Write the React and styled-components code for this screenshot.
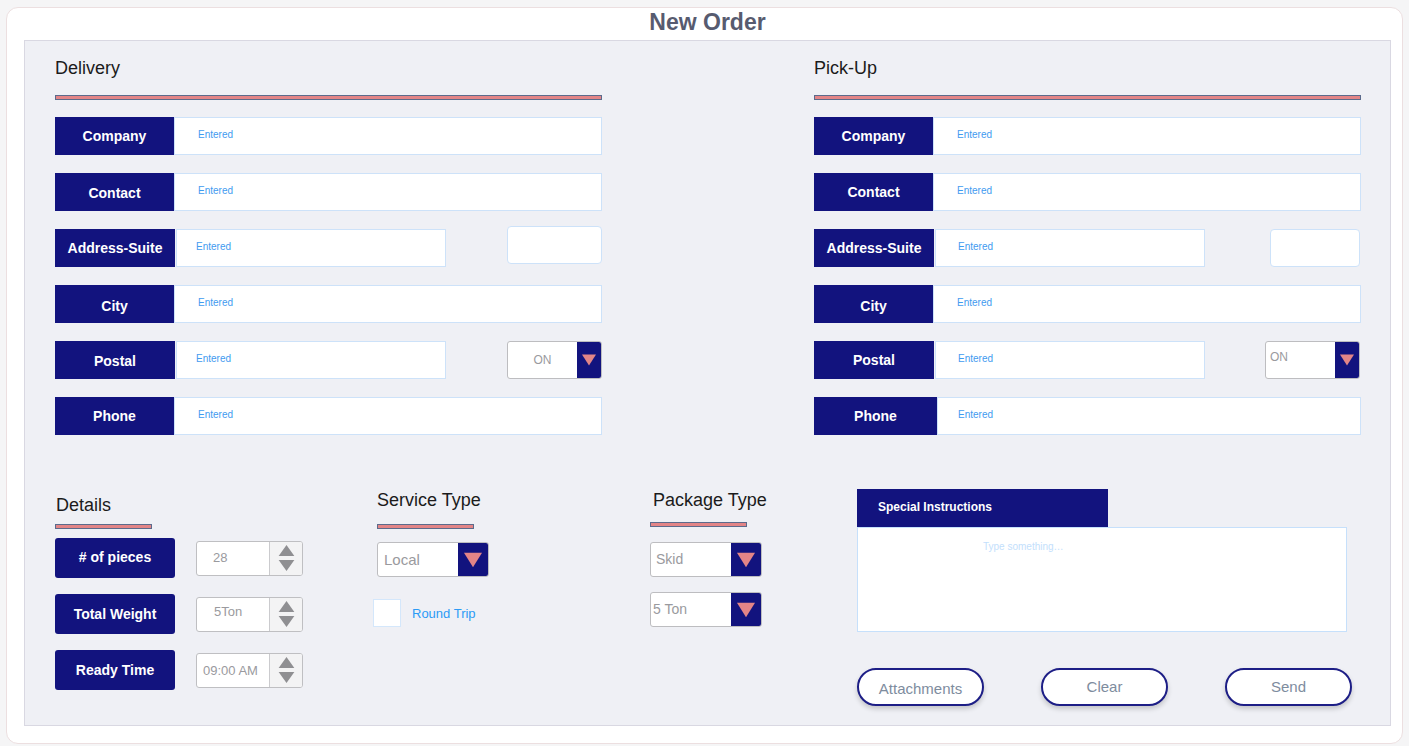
import styled, { createGlobalStyle } from "styled-components";

const navy = "#12137e";
const pink = "#e38587";

const GlobalStyle = createGlobalStyle`
  body {
    margin: 0;
    background: #f5f5f6;
    font-family: "Liberation Sans", Arial, sans-serif;
  }
`;

const Page = styled.div`
  padding: 7px 6px 2px 6px;
`;

const Card = styled.div`
  width: 1397px;
  height: 737px;
  box-sizing: border-box;
  background: #fff;
  border: 1px solid #ecdfe0;
  border-radius: 12px;
  padding: 0 11px 17px 17px;
  display: flex;
  flex-direction: column;
`;

const Title = styled.h1`
  margin: 0;
  height: 32px;
  line-height: 28px;
  text-align: center;
  font-size: 23px;
  font-weight: bold;
  color: #575b6f;
`;

const Panel = styled.div`
  flex: 1;
  background: #eff0f5;
  border: 1px solid #d9d8e2;
  padding: 0 30px;
  display: flex;
  flex-direction: column;
`;

const TopGrid = styled.div`
  display: flex;
  gap: 212px;
`;

const Column = styled.div`
  width: 547px;
  display: flex;
  flex-direction: column;
`;

const Heading = styled.div`
  font-size: 18px;
  line-height: 22px;
  color: #1b1b1b;
  margin-top: ${(p) => p.$top || 0}px;
  margin-left: ${(p) => p.$indent || 0}px;
`;

const Bar = styled.div`
  width: ${(p) => p.$w || 545}px;
  height: 3px;
  background: ${pink};
  border: 1px solid #5c6b8c;
  box-sizing: content-box;
  margin-top: ${(p) => p.$top || 16}px;
`;

const Rows = styled.div`
  display: flex;
  flex-direction: column;
  gap: 18px;
  margin-top: 17px;
`;

const Row = styled.div`
  display: flex;
  align-items: center;
  height: 38px;
`;

const Label = styled.div`
  width: ${(p) => p.$w || 119}px;
  height: 38px;
  flex-shrink: 0;
  background: ${navy};
  color: #fff;
  font-weight: bold;
  font-size: 14px;
  display: flex;
  align-items: center;
  justify-content: center;
  padding-top: ${(p) => p.$drop || 0}px;
  box-sizing: border-box;
`;

const Field = styled.div`
  height: 38px;
  box-sizing: border-box;
  background: #fff;
  border: 1px solid #cde2f9;
  margin-left: ${(p) => p.$gap || 0}px;
  width: ${(p) => (p.$w ? `${p.$w}px` : "auto")};
  flex: ${(p) => (p.$w ? "none" : 1)};
  padding: 0 0 3px ${(p) => p.$pad || 23}px;
  display: flex;
  align-items: center;
  font-size: 10px;
  color: #3f9bf0;
`;

const SmallBox = styled.div`
  width: ${(p) => p.$w}px;
  height: 38px;
  box-sizing: border-box;
  margin-left: auto;
  margin-right: ${(p) => p.$right || 0}px;
  align-self: flex-start;
  margin-top: ${(p) => p.$top || 0}px;
  background: #fff;
  border: 1px solid #cde2f9;
  border-radius: 4px;
`;

const Select = styled.div`
  display: flex;
  width: ${(p) => p.$w}px;
  height: ${(p) => p.$h}px;
  box-sizing: border-box;
  margin-left: ${(p) => (p.$push ? "auto" : "0")};
  margin-right: ${(p) => p.$right || 0}px;
  border: 1px solid #bdbdc0;
  border-radius: 3px;
  overflow: hidden;
  background: #fff;
`;

const SelectText = styled.div`
  flex: 1;
  display: flex;
  align-items: center;
  justify-content: ${(p) => (p.$center ? "center" : "flex-start")};
  padding-left: ${(p) => p.$pad || 0}px;
  padding-bottom: ${(p) => p.$lift || 0}px;
  font-size: ${(p) => p.$size || 15}px;
  color: #9a9a9e;
`;

const SelectButton = styled.div`
  width: ${(p) => p.$w}px;
  background: ${navy};
  display: flex;
  align-items: center;
  justify-content: center;
`;

const Triangle = ({ w, h, color = pink }) => (
  <svg width={w} height={h} viewBox="0 0 10 8">
    <polygon points="0,0 10,0 5,8" fill={color} />
  </svg>
);

const Bottom = styled.div`
  display: flex;
  margin-top: 54px;
`;

const DetailCol = styled.div`
  width: 322px;
  display: flex;
  flex-direction: column;
`;

const SmallCol = styled.div`
  width: ${(p) => p.$w}px;
  display: flex;
  flex-direction: column;
`;

const DetailRows = styled.div`
  display: flex;
  flex-direction: column;
  gap: 16px;
  margin-top: 9px;
`;

const DetailRow = styled.div`
  display: flex;
  align-items: center;
  gap: 21px;
`;

const DetailLabel = styled.div`
  width: 120px;
  height: 40px;
  border-radius: 3px;
  background: ${navy};
  color: #fff;
  font-weight: bold;
  font-size: 14px;
  display: flex;
  align-items: center;
  justify-content: center;
  padding-bottom: ${(p) => p.$lift || 0}px;
  box-sizing: border-box;
`;

const Spinner = styled.div`
  width: 107px;
  height: 35px;
  box-sizing: border-box;
  border: 1px solid #bfbfc2;
  border-radius: 3px;
  display: flex;
  overflow: hidden;
  background: #fff;
`;

const SpinText = styled.div`
  width: 72px;
  display: flex;
  align-items: center;
  padding-left: ${(p) => p.$pad}px;
  padding-bottom: ${(p) => p.$lift || 0}px;
  font-size: 13px;
  color: #9a9a9e;
  box-sizing: border-box;
`;

const SpinArrows = styled.div`
  flex: 1;
  background: #f3f3f4;
  border-left: 1px solid #cbcbce;
  display: flex;
  flex-direction: column;
  align-items: center;
  justify-content: center;
  gap: 4px;
`;

const Stack = styled.div`
  display: flex;
  flex-direction: column;
  gap: 15px;
  margin-top: ${(p) => p.$top || 12}px;
`;

const Check = styled.label`
  display: flex;
  align-items: center;
  gap: 11px;
  margin-left: -4px;
  margin-top: 7px;
  font-size: 13px;
  color: #2c9bf5;
`;

const Box = styled.span`
  width: 28px;
  height: 28px;
  box-sizing: border-box;
  background: #fff;
  border: 1px solid #d4e7fb;
`;

const SpecialCol = styled.div`
  width: 495px;
  display: flex;
  flex-direction: column;
`;

const Tab = styled.div`
  width: 251px;
  height: 38px;
  background: ${navy};
  color: #fff;
  font-size: 12px;
  font-weight: bold;
  display: flex;
  align-items: center;
  padding-left: 21px;
  padding-bottom: 2px;
  box-sizing: border-box;
`;

const TextArea = styled.div`
  width: 490px;
  height: 105px;
  box-sizing: border-box;
  background: #fff;
  border: 1px solid #c6e0fb;
  padding: 13px 0 0 125px;
  font-size: 10px;
  color: #c3e0fc;
`;

const Actions = styled.div`
  display: flex;
  justify-content: space-between;
  margin-top: 36px;
`;

const Pill = styled.button`
  width: 127px;
  height: 38px;
  border-radius: 19px;
  background: #fff;
  border: 2px solid #1d1e86;
  box-shadow: 0 3px 5px rgba(0, 0, 0, 0.18);
  font-family: "Liberation Sans", Arial, sans-serif;
  font-size: 15px;
  color: #7e8c9e;
  padding: ${(p) => (p.$low ? "3px 0 0" : "0 0 2px")};
`;

const ArrowUp = () => (
  <svg width="17" height="11" viewBox="0 0 10 7">
    <polygon points="5,0 10,7 0,7" fill="#8f8f92" />
  </svg>
);
const ArrowDown = () => (
  <svg width="17" height="11" viewBox="0 0 10 7">
    <polygon points="0,0 10,0 5,7" fill="#8f8f92" />
  </svg>
);

function AddressColumn({ title, side }) {
  const right = side === "pickup";
  return (
    <Column>
      <Heading $top={16}>{title}</Heading>
      <Bar $top={16} />
      <Rows>
        <Row>
          <Label>Company</Label>
          <Field>Entered</Field>
        </Row>
        <Row>
          <Label $drop={right ? 0 : 2}>Contact</Label>
          <Field>Entered</Field>
        </Row>
        <Row>
          <Label $w={120}>Address-Suite</Label>
          <Field $gap={1} $w={270} $pad={right ? 22 : 19}>
            Entered
          </Field>
          {right ? (
            <SmallBox $w={90} $right={1} />
          ) : (
            <SmallBox $w={95} $top={-3} />
          )}
        </Row>
        <Row>
          <Label $drop={4}>City</Label>
          <Field>Entered</Field>
        </Row>
        <Row>
          <Label $w={120} $drop={right ? 0 : 2}>
            Postal
          </Label>
          <Field $gap={1} $w={270} $pad={right ? 22 : 19}>
            Entered
          </Field>
          {right ? (
            <Select $w={95} $h={38} $push $right={1}>
              <SelectText $pad={4} $lift={6} $size={12}>
                ON
              </SelectText>
              <SelectButton $w={24}>
                <Triangle w={14} h={18} />
              </SelectButton>
            </Select>
          ) : (
            <Select $w={95} $h={38} $push>
              <SelectText $center $size={12}>
                ON
              </SelectText>
              <SelectButton $w={24}>
                <Triangle w={14} h={18} />
              </SelectButton>
            </Select>
          )}
        </Row>
        <Row>
          <Label $w={right ? 123 : 119}>Phone</Label>
          <Field $pad={right ? 20 : 23}>Entered</Field>
        </Row>
      </Rows>
    </Column>
  );
}

const details = [
  { label: "# of pieces", value: "28", pad: 16, lift: 2, labelLift: 3 },
  { label: "Total Weight", value: "5Ton", pad: 17, lift: 6, labelLift: 0 },
  { label: "Ready Time", value: "09:00 AM", pad: 6, lift: 0, labelLift: 0 },
];

export default function App() {
  return (
    <>
      <GlobalStyle />
      <Page>
        <Card>
          <Title>New Order</Title>
          <Panel>
            <TopGrid>
              <AddressColumn title="Delivery" side="delivery" />
              <AddressColumn title="Pick-Up" side="pickup" />
            </TopGrid>

            <Bottom>
              <DetailCol>
                <Heading $top={5} $indent={1}>
                  Details
                </Heading>
                <Bar $w={95} $top={8} />
                <DetailRows>
                  {details.map((d) => (
                    <DetailRow key={d.label}>
                      <DetailLabel $lift={d.labelLift}>{d.label}</DetailLabel>
                      <Spinner>
                        <SpinText $pad={d.pad} $lift={d.lift}>
                          {d.value}
                        </SpinText>
                        <SpinArrows>
                          <ArrowUp />
                          <ArrowDown />
                        </SpinArrows>
                      </Spinner>
                    </DetailRow>
                  ))}
                </DetailRows>
              </DetailCol>

              <SmallCol $w={273}>
                <Heading>Service Type</Heading>
                <Bar $w={95} $top={13} />
                <Stack $top={13}>
                  <Select $w={112} $h={35}>
                    <SelectText $pad={6}>Local</SelectText>
                    <SelectButton $w={30}>
                      <Triangle w={18} h={16} />
                    </SelectButton>
                  </Select>
                  <Check>
                    <Box />
                    Round Trip
                  </Check>
                </Stack>
              </SmallCol>

              <SmallCol $w={207}>
                <Heading $indent={3}>Package Type</Heading>
                <Bar $w={95} $top={11} />
                <Stack $top={15}>
                  <Select $w={112} $h={35}>
                    <SelectText $pad={5} $lift={2} $size={14}>
                      Skid
                    </SelectText>
                    <SelectButton $w={30}>
                      <Triangle w={18} h={16} />
                    </SelectButton>
                  </Select>
                  <Select $w={112} $h={35}>
                    <SelectText $pad={2} $lift={2} $size={14}>
                      5 Ton
                    </SelectText>
                    <SelectButton $w={30}>
                      <Triangle w={18} h={16} />
                    </SelectButton>
                  </Select>
                </Stack>
              </SmallCol>

              <SpecialCol>
                <Tab>Special Instructions</Tab>
                <TextArea>Type something…</TextArea>
                <Actions>
                  <Pill $low>Attachments</Pill>
                  <Pill>Clear</Pill>
                  <Pill>Send</Pill>
                </Actions>
              </SpecialCol>
            </Bottom>
          </Panel>
        </Card>
      </Page>
    </>
  );
}
